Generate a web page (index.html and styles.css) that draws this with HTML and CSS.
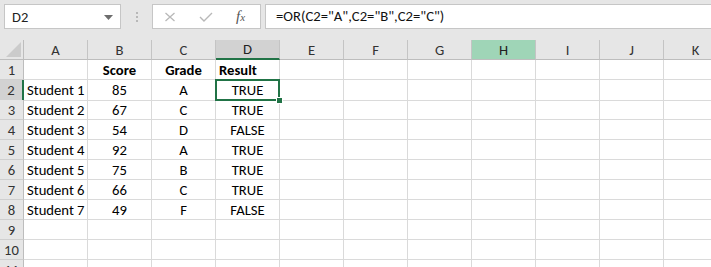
FILE: index.html
```html
<!DOCTYPE html>
<html>
<head>
<meta charset="utf-8">
<link rel="stylesheet" href="styles.css">
</head>
<body>
<div class="app">
  <div class="toolbar">
    <div class="namebox">
      <span class="name">D2</span>
      <svg class="drop" width="9" height="5" viewBox="0 0 9 5"><path d="M0 0H9L4.5 5Z" fill="#6d6d6d"/></svg>
    </div>
    <div class="grip"><span></span><span></span><span></span></div>
    <div class="fxbox">
      <svg class="ico" width="12" height="10" viewBox="0 0 12 10"><path d="M1.5 1L10.5 9M10.5 1L1.5 9" stroke="#b8b8b8" stroke-width="1.3" fill="none"/></svg>
      <svg class="ico" width="14" height="10" viewBox="0 0 14 10"><path d="M1 5L5 9L13 1" stroke="#b8b8b8" stroke-width="1.4" fill="none"/></svg>
      <span class="fx">f<small>x</small></span>
    </div>
    <div class="formula">=OR(C2="A",C2="B",C2="C")</div>
  </div>
  <div class="sheet">
    <div class="row head">
      <div class="corner"><svg width="15" height="15" viewBox="0 0 15 15"><path d="M15 0V15H0Z" fill="#cbcbcb"/></svg></div>
      <div class="ch">A</div><div class="ch">B</div><div class="ch">C</div><div class="ch sel">D</div><div class="ch">E</div><div class="ch">F</div><div class="ch">G</div><div class="ch hl">H</div><div class="ch">I</div><div class="ch">J</div><div class="ch">K</div>
    </div>
    <div class="row">
      <div class="rh">1</div>
      <div class="c"></div><div class="c b ctr">Score</div><div class="c b ctr">Grade</div><div class="c b">Result</div><div class="c"></div><div class="c"></div><div class="c"></div><div class="c"></div><div class="c"></div><div class="c"></div><div class="c"></div>
    </div>
    <div class="row">
      <div class="rh rsel">2</div>
      <div class="c">Student 1</div><div class="c ctr">85</div><div class="c ctr">A</div><div class="c ctr active">TRUE</div><div class="c"></div><div class="c"></div><div class="c"></div><div class="c"></div><div class="c"></div><div class="c"></div><div class="c"></div>
    </div>
    <div class="row">
      <div class="rh">3</div>
      <div class="c">Student 2</div><div class="c ctr">67</div><div class="c ctr">C</div><div class="c ctr">TRUE</div><div class="c"></div><div class="c"></div><div class="c"></div><div class="c"></div><div class="c"></div><div class="c"></div><div class="c"></div>
    </div>
    <div class="row">
      <div class="rh">4</div>
      <div class="c">Student 3</div><div class="c ctr">54</div><div class="c ctr">D</div><div class="c ctr">FALSE</div><div class="c"></div><div class="c"></div><div class="c"></div><div class="c"></div><div class="c"></div><div class="c"></div><div class="c"></div>
    </div>
    <div class="row">
      <div class="rh">5</div>
      <div class="c">Student 4</div><div class="c ctr">92</div><div class="c ctr">A</div><div class="c ctr">TRUE</div><div class="c"></div><div class="c"></div><div class="c"></div><div class="c"></div><div class="c"></div><div class="c"></div><div class="c"></div>
    </div>
    <div class="row">
      <div class="rh">6</div>
      <div class="c">Student 5</div><div class="c ctr">75</div><div class="c ctr">B</div><div class="c ctr">TRUE</div><div class="c"></div><div class="c"></div><div class="c"></div><div class="c"></div><div class="c"></div><div class="c"></div><div class="c"></div>
    </div>
    <div class="row">
      <div class="rh">7</div>
      <div class="c">Student 6</div><div class="c ctr">66</div><div class="c ctr">C</div><div class="c ctr">TRUE</div><div class="c"></div><div class="c"></div><div class="c"></div><div class="c"></div><div class="c"></div><div class="c"></div><div class="c"></div>
    </div>
    <div class="row">
      <div class="rh">8</div>
      <div class="c">Student 7</div><div class="c ctr">49</div><div class="c ctr">F</div><div class="c ctr">FALSE</div><div class="c"></div><div class="c"></div><div class="c"></div><div class="c"></div><div class="c"></div><div class="c"></div><div class="c"></div>
    </div>
    <div class="row">
      <div class="rh">9</div>
      <div class="c"></div><div class="c"></div><div class="c"></div><div class="c"></div><div class="c"></div><div class="c"></div><div class="c"></div><div class="c"></div><div class="c"></div><div class="c"></div><div class="c"></div>
    </div>
    <div class="row">
      <div class="rh">10</div>
      <div class="c"></div><div class="c"></div><div class="c"></div><div class="c"></div><div class="c"></div><div class="c"></div><div class="c"></div><div class="c"></div><div class="c"></div><div class="c"></div><div class="c"></div>
    </div>
    <div class="row">
      <div class="rh">11</div>
      <div class="c"></div><div class="c"></div><div class="c"></div><div class="c"></div><div class="c"></div><div class="c"></div><div class="c"></div><div class="c"></div><div class="c"></div><div class="c"></div><div class="c"></div>
    </div>
  </div>
</div>
</body>
</html>
```

FILE: styles.css
```css
html, body {
  margin: 0;
  padding: 0;
  background: #ffffff;
}
.app {
  width: 711px;
  height: 267px;
  overflow: hidden;
  font-family: Carlito, Lato, sans-serif;
}
.toolbar {
  height: 40px;
  box-sizing: border-box;
  background: #e6e6e6;
  padding-top: 4px;
  display: flex;
  align-items: flex-start;
}
.namebox {
  margin-left: 4px;
  width: 117px;
  height: 25px;
  box-sizing: border-box;
  background: #fff;
  border: 1px solid #c6c6c6;
  display: flex;
  align-items: center;
  justify-content: space-between;
  padding: 0 7px 0 7px;
}
.name {
  font-size: 14.5px;
  color: #222;
}
.drop {
  margin-top: 1px;
}
.grip {
  width: 31px;
  height: 25px;
  display: flex;
  flex-direction: column;
  align-items: center;
  justify-content: center;
  gap: 2px;
}
.grip span {
  width: 2px;
  height: 2px;
  background: #b8b8b8;
}
.fxbox {
  width: 109px;
  height: 25px;
  box-sizing: border-box;
  background: #fff;
  border: 1px solid #c6c6c6;
  display: flex;
  align-items: center;
  padding-left: 11px;
  gap: 23px;
}
.fx {
  font-family: "Liberation Serif", serif;
  font-style: italic;
  font-size: 15px;
  color: #555;
  margin-left: 0;
}
.fx small {
  font-size: 11px;
}
.formula {
  margin-left: 4px;
  flex: 1;
  height: 25px;
  box-sizing: border-box;
  background: #fff;
  border: 1px solid #c6c6c6;
  border-right: none;
  font-size: 14.67px;
  color: #111;
  padding-left: 10px;
  line-height: 23px;
}
.sheet {
  background: #fff;
}
.row {
  display: grid;
  grid-template-columns: 24px repeat(11, 64px);
  height: 20px;
}
.row > div {
  box-sizing: border-box;
  border-right: 1px solid #dadada;
  border-bottom: 1px solid #dadada;
  font-size: 14.67px;
  line-height: 19px;
  padding-top: 1px;
  white-space: nowrap;
  overflow: hidden;
  color: #000;
}
.corner {
  background: #e6e6e6;
  display: flex;
  align-items: flex-end;
  justify-content: flex-end;
  padding: 0 2px 2px 0 !important;
  border-right-color: #bdbdbd !important;
  border-bottom-color: #bdbdbd !important;
}
.row > .ch {
  background: #e6e6e6;
  text-align: center;
  line-height: 18px;
  color: #333;
  border-right-color: #c4c4c4;
  border-bottom-color: #bdbdbd;
}
.row > .ch.sel {
  background: #d2d2d2;
  border-bottom: 2px solid #217346;
  line-height: 17px;
  color: #222;
}
.row > .ch.hl {
  background: #9fd5b7;
  color: #222;
}
.row > .rh {
  background: #e6e6e6;
  text-align: center;
  color: #333;
  border-right-color: #bdbdbd;
  border-bottom-color: #cfcfcf;
}
.row > .rh.rsel {
  background: #d2d2d2;
  border-right: 2px solid #217346;
}
.row > .c {
  padding-left: 3px;
}
.row > .ctr {
  text-align: center;
  padding-left: 0;
}
.b {
  font-weight: 700;
}
.row > .active {
  position: relative;
  overflow: visible;
}
.active::before {
  content: "";
  position: absolute;
  left: -1px;
  top: -1px;
  right: -1px;
  bottom: -1px;
  border: 2px solid #217346;
}
.active::after {
  content: "";
  position: absolute;
  right: -4px;
  bottom: -4px;
  width: 5px;
  height: 5px;
  background: #217346;
  border: 1px solid #fff;
  z-index: 2;
}
```
